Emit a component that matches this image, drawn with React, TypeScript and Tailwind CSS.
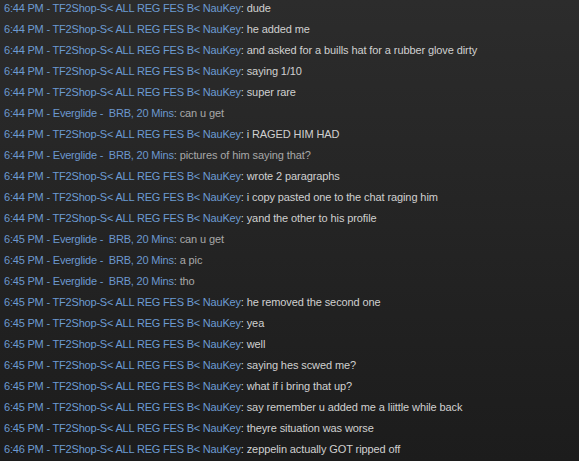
import React from "react";

const N = "TF2Shop-S< ALL REG FES B< NauKey";
const E = "Everglide -  BRB, 20 Mins";

const lines: [string, string, string][] = [
  ["6:44 PM", N, "dude"],
  ["6:44 PM", N, "he added me"],
  ["6:44 PM", N, "and asked for a buills hat for a rubber glove dirty"],
  ["6:44 PM", N, "saying 1/10"],
  ["6:44 PM", N, "super rare"],
  ["6:44 PM", E, "can u get"],
  ["6:44 PM", N, "i RAGED HIM HAD"],
  ["6:44 PM", E, "pictures of him saying that?"],
  ["6:44 PM", N, "wrote 2 paragraphs"],
  ["6:44 PM", N, "i copy pasted one to the chat raging him"],
  ["6:44 PM", N, "yand the other to his profile"],
  ["6:45 PM", E, "can u get"],
  ["6:45 PM", E, "a pic"],
  ["6:45 PM", E, "tho"],
  ["6:45 PM", N, "he removed the second one"],
  ["6:45 PM", N, "yea"],
  ["6:45 PM", N, "well"],
  ["6:45 PM", N, "saying hes scwed me?"],
  ["6:45 PM", N, "what if i bring that up?"],
  ["6:45 PM", N, "say remember u added me a liittle while back"],
  ["6:45 PM", N, "theyre situation was worse"],
  ["6:46 PM", N, "zeppelin actually GOT ripped off"],
];

export default function App() {
  return (
    <div
      className="w-[579px] h-[461px] overflow-hidden bg-gradient-to-b from-[#2c2c2c] to-[#1c1c1c]"
      style={{ fontFamily: '"Liberation Sans", Arial, sans-serif' }}
    >
      <div className="-mt-[2px] pl-[4px] flex flex-col">
        {lines.map(([t, n, m], i) => {
          const me = n === E;
          return (
            <div key={i} className="h-[21px] leading-[21px] text-[11px] whitespace-pre">
              <span className={`tracking-[-0.2px] ${me ? "text-[#6c98cf]" : "text-[#6c9bd2]"}`}>
                {t} - {n}
              </span>
              <span className={`tracking-[-0.1px] ${me ? "text-[#a8a8a8]" : "text-[#d0d0d0]"}`}>: {m}</span>
            </div>
          );
        })}
      </div>
    </div>
  );
}
